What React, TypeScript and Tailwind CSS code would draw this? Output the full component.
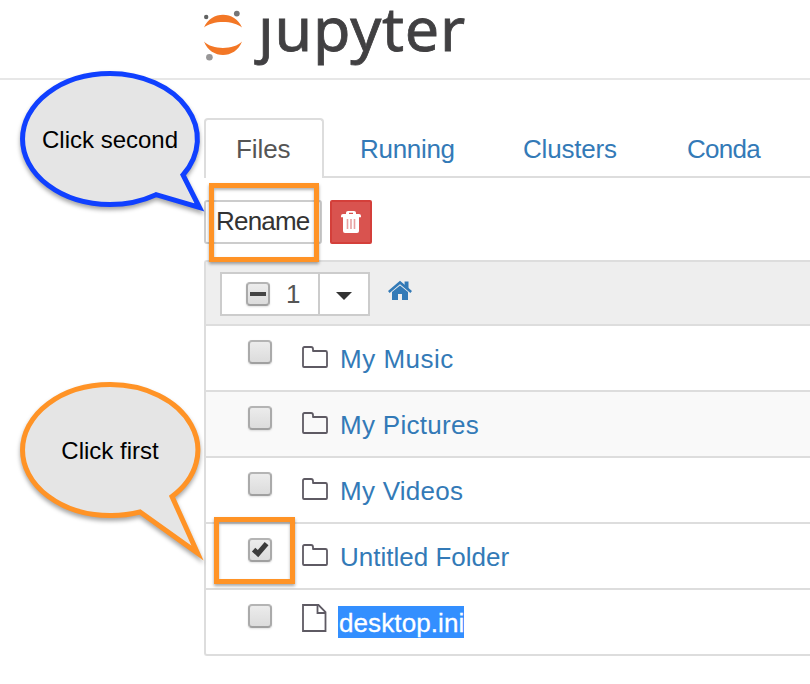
import type { ReactNode } from "react";

function CheckBox({ state = "off" }: { state?: "off" | "on" | "mixed" }) {
  return (
    <span className="block h-6 w-6 shrink-0 rounded-[4px] border-2 border-[#aaaaaa] border-t-[#b4b4b4] border-b-[#a0a0a0] bg-linear-to-b from-[#ececec] to-[#dcdcdc] shadow-[0_1px_2px_rgba(0,0,0,0.12)]">
      {state !== "off" && (
        <svg viewBox="0 0 20 20" className="block h-5 w-5">
          {state === "mixed" ? (
            <rect x="2" y="8" width="16" height="4" fill="#444" />
          ) : (
            <path d="M3.6 9.6 8 13.6 16.6 3.6" fill="none" stroke="#3c3c3c" strokeWidth="5" />
          )}
        </svg>
      )}
    </span>
  );
}

function FolderIcon() {
  return (
    <svg viewBox="0 0 28 24" className="block h-6 w-7 shrink-0" fill="none" stroke="#5e5a63" strokeWidth="1.8" strokeLinejoin="round">
      <path d="M2 3.5Q2 2 3.5 2H10Q12 2 12 4V6H24.5Q26 6 26 7.5V21Q26 22 25 22H3Q2 22 2 21Z" />
    </svg>
  );
}

function FileIcon() {
  return (
    <svg viewBox="0 0 28 30" className="block h-[30px] w-7 shrink-0" fill="none" stroke="#5e5a63" strokeWidth="1.8">
      <path d="M2 2H17.5L24.5 9V28H2Z" />
      <path d="M16.5 2V10H24.5" />
    </svg>
  );
}

function Highlight({ className }: { className: string }) {
  return (
    <div
      className={`pointer-events-none absolute border-[5px] border-[#ff9326] shadow-[0_2px_3px_rgba(0,0,0,0.35),inset_0_2px_3px_rgba(0,0,0,0.3)] ${className}`}
    />
  );
}

function Callout({ className, color, path, children }: { className: string; color: string; path: string; children: ReactNode }) {
  return (
    <div className={`absolute flex h-[140px] w-[184px] justify-center ${className}`}>
      <svg viewBox="0 0 190 190" className="absolute top-0 left-0 h-[190px] w-[190px] overflow-visible drop-shadow-[0_3px_2px_rgba(0,0,0,0.35)]">
        <path d={path} fill="#e5e5e5" stroke={color} strokeWidth="5" strokeMiterlimit="10" />
      </svg>
      <span className="relative pt-[57px] text-[24px] leading-7 whitespace-nowrap text-black">{children}</span>
    </div>
  );
}

const tabs = [
  { name: "Running", cls: "w-[96px] ml-[36px] tracking-[-0.3px]" },
  { name: "Clusters", cls: "w-[96px] ml-[67px] tracking-[-0.2px]" },
  { name: "Conda", cls: "w-[76px] ml-[68px] tracking-[-0.7px]" },
];

const rows = [
  { name: "My Music", cls: "tracking-[0.5px]", bg: "bg-white" },
  { name: "My Pictures", cls: "tracking-[0.3px]", bg: "bg-[#f9f9f9]" },
  { name: "My Videos", cls: "tracking-[0.25px]", bg: "bg-white" },
  { name: "Untitled Folder", cls: "tracking-[0px]", bg: "bg-white" },
];

export default function App() {
  return (
    <div className="relative h-[684px] w-[810px] overflow-hidden bg-white font-['Liberation_Sans',Arial,sans-serif] text-[26px] leading-[30px] text-[#337ab7]">
      <header className="flex h-20 border-b-2 border-[#e7e7e7] pl-[203px]">
        <svg viewBox="0 0 42 52" className="mt-[10px] block h-[52px] w-[42px]">
          <path d="M1 17.5C8 0.5 32 0.5 39 17.5C31 10 9 10 1 17.5Z" fill="#f37726" />
          <path d="M1 31.5C8 49.5 32 49.5 39 31.5C31 40 9 40 1 31.5Z" fill="#f37726" />
          <circle cx="3.2" cy="7" r="2.2" fill="#616262" />
          <circle cx="33.8" cy="3.6" r="2.9" fill="#767677" />
          <circle cx="6.4" cy="47.2" r="3.3" fill="#989798" />
        </svg>
        <span className="-mt-[15px] ml-[13px] h-[90px] font-['Noto_Sans',sans-serif] text-[61px] leading-[86px] tracking-[0.8px] text-[#414042] [-webkit-text-stroke:0.8px_#414042]">
          ȷupyter
        </span>
      </header>

      <nav className="mt-[38px] ml-[204px] flex h-[60px]">
        <div className="h-[60px] w-[120px] rounded-t-[4px] border-2 border-b-0 border-[#dddddd] pt-[14px] pl-[30px] tracking-[-0.1px] text-[#555555]">Files</div>
        <div className="flex flex-1 border-b-2 border-[#dddddd] pt-4">
          {tabs.map((tab) => (
            <a key={tab.name} className={tab.cls}>
              {tab.name}
            </a>
          ))}
        </div>
      </nav>

      <div className="mt-[22px] ml-[204px] flex h-11 gap-2">
        <button className="h-11 w-[118px] rounded-[3px] border-2 border-[#cccccc] pb-[2px] pl-[10px] text-left tracking-[-0.8px] whitespace-nowrap text-[#333333]">
          Rename
        </button>
        <button className="flex h-11 w-[42px] items-center justify-center rounded-[2px] border-2 border-[#d43f3a] bg-[#d9534f]">
          <svg viewBox="0 0 20 22" className="h-[22px] w-5">
            <path d="M5 3V1.8Q5 0 7 0H13Q15 0 15 1.8V3H18Q20 3 20 5V6.2H0V5Q0 3 2 3ZM8 3H12V1.8H8Z" fill="#fff" />
            <path d="M2 6H18V20Q18 22 16 22H4Q2 22 2 20Z" fill="#fff" />
            <path d="M6.5 8V18M10 8V18M13.5 8V18" stroke="#e8a0a0" strokeWidth="1.6" />
          </svg>
        </button>
      </div>

      <main className="mt-4 ml-[204px] rounded-l-[3px] border-2 border-r-0 border-[#dddddd]">
        <div className="flex h-16 border-b-2 border-[#dddddd] bg-[#eeeeee] pt-[10px] pl-[14px]">
          <div className="flex h-11 w-[150px] border-2 border-[#cccccc] bg-white text-[#333333]">
            <div className="flex w-[98px] shrink-0 items-start border-r-2 border-[#cccccc] pt-2 pl-[24px]">
              <CheckBox state="mixed" />
              <span className="-mt-[3px] ml-[16px] text-[#555]">1</span>
            </div>
            <div className="flex flex-1 justify-center pt-[18px]">
              <svg viewBox="0 0 16 8" className="h-2 w-4">
                <path d="M0 0H16L8 8Z" fill="#333" />
              </svg>
            </div>
          </div>
          <svg viewBox="0 0 24 20" className="mt-[8px] ml-[18px] h-5 w-6" fill="#337ab7">
            <path d="M0.8 12 12 2.4 23.2 12" fill="none" stroke="#337ab7" strokeWidth="2.6" />
            <path d="M16.6 1.5H20.5V9.5L16.6 6Z" />
            <path d="M4 12 12 5.4 20 12V20H14V14H10V20H4Z" />
          </svg>
        </div>
        {rows.map((row, i) => (
          <div key={row.name} className={`flex h-[66px] border-b-2 border-[#dddddd] pt-[14px] pl-[42px] ${row.bg}`}>
            <CheckBox state={i === 3 ? "on" : "off"} />
            <span className="mt-[5px] ml-[29px]">
              <FolderIcon />
            </span>
            <span className={`mt-[4px] ml-[11px] whitespace-nowrap ${row.cls}`}>{row.name}</span>
          </div>
        ))}
        <div className="flex h-16 pt-[14px] pl-[42px]">
          <CheckBox />
          <span className="-mt-[1px] ml-[29px]">
            <FileIcon />
          </span>
          <span className="mt-[2px] ml-[9px] h-8 w-[126px] bg-[#338fff] pt-[2px] pl-px tracking-[0.1px] whitespace-nowrap text-white [-webkit-text-stroke:0.3px_white]">desktop.ini</span>
        </div>
      </main>

      <Highlight className="top-[183px] left-[209px] h-[79px] w-[110px]" />
      <Highlight className="top-[517px] left-[214px] h-[67px] w-[81px]" />

      <Callout
        className="top-[69px] left-[18px]"
        color="#1040ff"
        path="M165 106A87.5 65.5 0 0 0 92 4.5A87.5 65.5 0 0 0 92 135.5A87.5 65.5 0 0 0 138 125.7L181.5 138.5Z"
      >
        Click second
      </Callout>
      <Callout
        className="top-[380px] left-[18px]"
        color="#ff9326"
        path="M154 116.5A87.5 65.5 0 0 0 92 4.5A87.5 65.5 0 0 0 92 135.5A87.5 65.5 0 0 0 122 132L179.5 173Z"
      >
        Click first
      </Callout>
    </div>
  );
}
